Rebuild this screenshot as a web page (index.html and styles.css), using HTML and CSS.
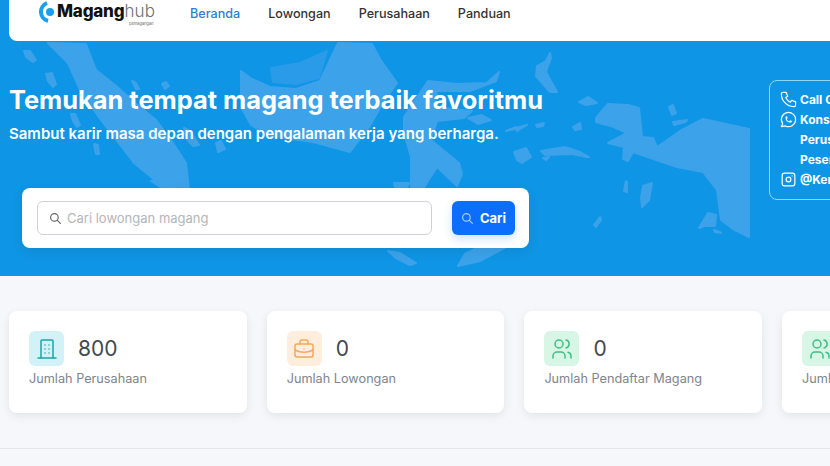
FILE: index.html
```html
<!DOCTYPE html>
<html lang="id">
<head>
  <meta charset="UTF-8" />
  <meta name="viewport" content="width=device-width, initial-scale=1" />
  <title>Maganghub</title>
  <link rel="stylesheet" href="styles.css">
</head>
<body>
  <section class="hero">
    <svg class="peta" viewBox="0 0 830 276" aria-hidden="true">
      <!-- Sumatra -->
      <path d="M48 43L86 44L96 70L115 85L133 101L156 120L171 140L186 163L189 190L167 190L134 163L101 120L81 92L68 63Z"/>
      <path d="M24 51L30 51L36 60L33 62L26 57Z"/>
      <path d="M46 74L52 73L56 84L53 87L48 81Z"/>
      <path d="M71 114L75 114L80 125L77 127L73 121Z"/>
      <path d="M94 144L98 145L99 154L96 154Z"/>
      <path d="M132 81L136 83L139 89L136 89Z"/>
      <path d="M162 84L166 82L169 86L165 89Z"/>
      <path d="M184 128L190 131L199 145L193 146L186 138Z"/>
      <path d="M216 143L221 141L225 149L218 152Z"/>
      <!-- Kalimantan -->
      <path d="M241 71L252 79L270 87L296 89L320 81L338 43L372 44L380 59L397 83L383 103L369 127L350 152L313 142L270 136L251 125L241 107Z"/>
      <path d="M271 68L300 63L327 51L319 78L296 84L273 82Z" class="redup"/>
      <!-- Sulawesi -->
      <path d="M404 117L428 81L457 84L487 83L499 72L496 81L470 91L437 91L434 107L472 111L464 118L437 121L431 140L459 163L462 174L457 186L437 167L423 189L411 189L411 157L404 133Z"/>
      <path d="M468 118L482 115L491 120L478 124Z"/>
      <path d="M516 128L527 125L517 131Z"/>
      <!-- Maluku -->
      <path d="M537 66L546 61L550 53L551 58L546 72L557 92L550 92L543 84L536 76Z"/>
      <path d="M579 102L588 97L597 103L586 105Z"/>
      <path d="M573 127L580 123L581 129L575 130Z"/>
      <path d="M536 125L544 123L543 126L537 127Z"/>
      <path d="M506 131L516 127L515 129Z"/>
      <path d="M514 152L526 148L531 157L522 163L517 160Z"/>
      <path d="M541 151L565 147L580 152L589 157L587 157L572 154L545 155Z"/>
      <path d="M543 158L549 157L546 160Z"/>
      <!-- Papua -->
      <path d="M596 118L608 104L628 105L639 108L642 137L653 138L657 147L680 131L703 119L749 129L749 237L733 229L721 220L717 190L703 172L677 167L633 152L628 161L623 159L624 147L608 143L627 133L614 127L596 122Z"/>
      <path d="M669 107L673 105L676 113L672 115Z"/>
      <path d="M673 122L687 120L685 122L674 125Z"/>
      <path d="M626 181L627 182L627 192L624 191Z"/>
      <path d="M643 186L652 183L649 200L642 207L641 198Z"/>
      <path d="M699 228L708 213L716 215L715 226L705 226Z"/>
      <path d="M714 230L720 232L721 233L715 232Z"/>
      <path d="M594 225L600 217L601 220L596 227Z"/>
      <!-- Nusa Tenggara -->
      <path d="M388 251L400 253L416 263L410 265L396 258Z"/>
      <path d="M458 266L465 254L490 241L516 233L510 245L480 261Z"/>
      <path d="M151 181L182 181L183 190L165 190Z"/>
      <path d="M394 183L409 183L406 190L396 190Z"/>
    </svg>

    <nav class="navbar">
      <a class="logo" href="#">
        <svg class="logo-ikon" viewBox="0 0 16 24" aria-hidden="true">
          <path d="M8 3A9.500 9.500 0 0 0 9 21"/>
          <circle cx="11" cy="12" r="4"/>
        </svg>
        <span class="logo-teks"><b>Magang</b><span class="logo-hub">hub</span></span>
        <span class="logo-kecil">pemagangan</span>
      </a>
      <ul class="menu">
        <li><a class="aktif" href="#">Beranda</a></li>
        <li><a href="#">Lowongan</a></li>
        <li><a href="#">Perusahaan</a></li>
        <li><a href="#">Panduan</a></li>
      </ul>
    </nav>

    <div class="hero-isi">
      <h1>Temukan tempat magang terbaik favoritmu</h1>
      <p>Sambut karir masa depan dengan pengalaman kerja yang berharga.</p>
      <form class="cari">
        <label class="cari-input">
          <svg class="ikon-cari" viewBox="0 0 24 24"><circle cx="10" cy="10" r="7"/><path d="M21 21l-6-6"/></svg>
          <input type="text" placeholder="Cari lowongan magang" />
        </label>
        <button type="button">
          <svg class="ikon-cari" viewBox="0 0 24 24"><circle cx="10" cy="10" r="7"/><path d="M21 21l-6-6"/></svg>
          Cari
        </button>
      </form>
    </div>

    <aside class="kontak">
      <div class="kontak-baris">
        <svg viewBox="0 0 24 24"><path d="M5 3h4l2 5l-2.500 1.500a11 11 0 0 0 6 6l1.500-2.500l5 2v4a2 2 0 0 1-2 2A16 16 0 0 1 3 5a2 2 0 0 1 2-2"/></svg>
        <span>Call Center 1500</span>
      </div>
      <div class="kontak-baris">
        <svg viewBox="0 0 24 24"><path d="M3 21l1.650-3.800a9 9 0 1 1 3.400 2.900z"/><path d="M9 10a.5.5 0 0 0 1 0v-1a.5.5 0 0 0-1 0v1a5 5 0 0 0 5 5h1a.5.5 0 0 0 0-1h-1a.5.5 0 0 0 0 1"/></svg>
        <span>Konsultasi</span>
      </div>
      <div class="kontak-baris geser"><span>Perusahaan</span></div>
      <div class="kontak-baris geser"><span>Peserta</span></div>
      <div class="kontak-baris">
        <svg viewBox="0 0 24 24"><rect x="4" y="4" width="16" height="16" rx="3"/><circle cx="12" cy="12" r="3"/><path d="M16.500 7.500v.01"/></svg>
        <span>@Kemnaker</span>
      </div>
    </aside>
  </section>

  <section class="statistik">
    <div class="kartu">
      <div class="kartu-atas">
        <span class="ikon ikon-biru">
          <svg viewBox="0 0 24 24"><path d="M3 21h18"/><path d="M6 21V4a1 1 0 0 1 1-1h10a1 1 0 0 1 1 1v17"/><path d="M10 8h.01M14 8h.01M10 12h.01M14 12h.01M10 16h.01M14 16h.01"/></svg>
        </span>
        <strong>800</strong>
      </div>
      <p>Jumlah Perusahaan</p>
    </div>
    <div class="kartu">
      <div class="kartu-atas">
        <span class="ikon ikon-oranye">
          <svg viewBox="0 0 24 24"><rect x="3" y="7" width="18" height="13" rx="2"/><path d="M8 7V5a2 2 0 0 1 2-2h4a2 2 0 0 1 2 2v2"/><path d="M3 13a20 20 0 0 0 18 0"/><path d="M12 12v.01"/></svg>
        </span>
        <strong>0</strong>
      </div>
      <p>Jumlah Lowongan</p>
    </div>
    <div class="kartu">
      <div class="kartu-atas">
        <span class="ikon ikon-hijau">
          <svg viewBox="0 0 24 24"><circle cx="9" cy="7" r="4"/><path d="M3 21v-2a4 4 0 0 1 4-4h4a4 4 0 0 1 4 4v2"/><path d="M16 3.100a4 4 0 0 1 0 7.800"/><path d="M21 21v-2a4 4 0 0 0-3-3.850"/></svg>
        </span>
        <strong>0</strong>
      </div>
      <p>Jumlah Pendaftar Magang</p>
    </div>
    <div class="kartu">
      <div class="kartu-atas">
        <span class="ikon ikon-hijau">
          <svg viewBox="0 0 24 24"><circle cx="9" cy="7" r="4"/><path d="M3 21v-2a4 4 0 0 1 4-4h4a4 4 0 0 1 4 4v2"/><path d="M16 3.100a4 4 0 0 1 0 7.800"/><path d="M21 21v-2a4 4 0 0 0-3-3.850"/></svg>
        </span>
        <strong>0</strong>
      </div>
      <p>Jumlah Peserta</p>
    </div>
  </section>
</body>
</html>
```

FILE: styles.css
```css
:root {
  --biru: #0f95e5;
  --tombol: #0d6efd;
  --latar: #f6f7fa;
  --teks: #444950;
  --abu: #80858c;
}
* {
  box-sizing: border-box;
}
html, body {
  height: 466px;
  overflow: hidden;
}
body {
  margin: 0;
  width: 830px;
  font-family: Inter, "Noto Sans", sans-serif;
  background-color: var(--latar);
  color: var(--teks);
}
a {
  text-decoration: none;
  color: inherit;
}

/* hero */
.hero {
  position: relative;
  height: 276px;
  padding-left: 9px;
  background-color: var(--biru);
  overflow: hidden;
}
.peta {
  position: absolute;
  left: 0;
  top: 0;
  width: 830px;
  height: 276px;
  fill: #3ca2ea;
  stroke: #3ca2ea;
  stroke-width: 2;
  stroke-linejoin: round;
}
.peta .redup {
  fill: #2a9be8;
  stroke: #2a9be8;
}
.hero-isi {
  position: relative;
  padding-top: 44px;
}
.hero h1 {
  margin: 0;
  font-size: 25.400px;
  line-height: 30px;
  font-weight: 700;
  color: #fff;
}
.hero-isi > p {
  margin: 9px 0 0;
  font-size: 15px;
  line-height: 20px;
  font-weight: 600;
  color: #fff;
}

/* navbar */
.navbar {
  position: relative;
  display: flex;
  height: 41px;
  padding-left: 30px;
  background-color: #fff;
  border-bottom-left-radius: 8px;
}
.logo {
  position: relative;
  display: flex;
  width: 151px;
  height: 26px;
  color: #111;
}
.logo-ikon {
  width: 16px;
  height: 24px;
  flex: none;
  fill: #18a0ee;
}
.logo-ikon path {
  fill: none;
  stroke: #18a0ee;
  stroke-width: 4;
}
.logo-teks {
  margin: 1px 0 0 2px;
  font-size: 17px;
  line-height: 20px;
}
.logo-teks b {
  font-weight: 800;
  letter-spacing: -0.2px;
}
.logo-hub {
  font-weight: 300;
  color: #6d7175;
  letter-spacing: 0.2px;
}
.logo-kecil {
  position: absolute;
  left: 90px;
  top: 21px;
  font-size: 4px;
  line-height: 5px;
  color: #666;
}
.menu {
  display: flex;
  gap: 28px;
  margin: 0;
  padding: 6px 0 0;
  list-style: none;
  font-size: 12.600px;
  line-height: 16px;
  font-weight: 500;
  color: #333;
}
.menu .aktif {
  color: #2f7fd0;
}

/* pencarian */
.cari {
  display: flex;
  gap: 20px;
  width: 507px;
  height: 60px;
  margin: 44px 0 0 13px;
  padding: 13px 14px 13px 15px;
  background-color: #fff;
  border-radius: 8px;
  box-shadow: 0 4px 12px rgba(0,0,0,0.08);
}
.cari-input {
  flex: 1;
  display: flex;
  align-items: center;
  gap: 5px;
  padding-left: 11px;
  border: 1px solid #cfd2d6;
  border-radius: 6px;
}
.cari-input input {
  flex: 1;
  min-width: 0;
  border: none;
  outline: none;
  padding: 0;
  font-family: inherit;
  font-size: 13px;
}
.cari-input input::placeholder {
  color: #b3b6ba;
}
.ikon-cari {
  width: 13px;
  height: 13px;
  flex: none;
  fill: none;
  stroke: #666;
  stroke-width: 2.200;
  stroke-linecap: round;
}
.cari button {
  display: flex;
  align-items: center;
  justify-content: center;
  gap: 6px;
  width: 63px;
  padding: 0;
  border: none;
  border-radius: 6px;
  background-color: var(--tombol);
  color: #fff;
  font-family: inherit;
  font-size: 13px;
  font-weight: 700;
  box-shadow: 0 4px 8px rgba(13,110,253,0.2);
}
.cari button .ikon-cari {
  stroke: #a9d0fb;
}

/* kontak */
.kontak {
  position: absolute;
  left: 769px;
  top: 80px;
  width: 180px;
  height: 120px;
  padding: 8px 0 0 9px;
  border: 1px solid #8fd6f7;
  border-radius: 8px;
  color: #fff;
  font-size: 12px;
  font-weight: 700;
}
.kontak-baris {
  display: flex;
  align-items: center;
  gap: 2px;
  height: 20px;
  white-space: nowrap;
}
.kontak-baris.geser {
  padding-left: 21px;
}
.kontak-baris svg {
  width: 19px;
  height: 19px;
  flex: none;
  fill: none;
  stroke: #fff;
  stroke-width: 1.500;
  stroke-linecap: round;
  stroke-linejoin: round;
}

/* statistik */
.statistik {
  display: flex;
  gap: 20px;
  height: 173px;
  padding: 35px 0 0 9px;
  border-bottom: 1px solid #e3e5e8;
}
.kartu {
  flex: none;
  width: 237.700px;
  height: 102px;
  padding: 20px;
  background-color: #fff;
  border-radius: 8px;
  box-shadow: 0 3px 10px rgba(0,0,0,0.08);
}
.kartu-atas {
  display: flex;
  align-items: center;
  gap: 14px;
}
.kartu-atas strong {
  font-size: 21px;
  line-height: 35px;
  font-weight: 400;
}
.kartu p {
  margin: 5px 0 0;
  font-size: 12.700px;
  line-height: 16px;
  color: var(--abu);
}
.ikon {
  display: flex;
  align-items: center;
  justify-content: center;
  width: 35px;
  height: 35px;
  border-radius: 6px;
}
.ikon svg {
  width: 24px;
  height: 24px;
  fill: none;
  stroke-width: 1.500;
  stroke-linecap: round;
  stroke-linejoin: round;
}
.ikon-biru {
  background-color: #d2f2f8;
}
.ikon-biru svg {
  stroke: #1ba7a6;
}
.ikon-oranye {
  background-color: #ffeedd;
}
.ikon-oranye svg {
  stroke: #f3a95a;
}
.ikon-hijau {
  background-color: #d8f6e6;
}
.ikon-hijau svg {
  stroke: #3cbf86;
}
```
